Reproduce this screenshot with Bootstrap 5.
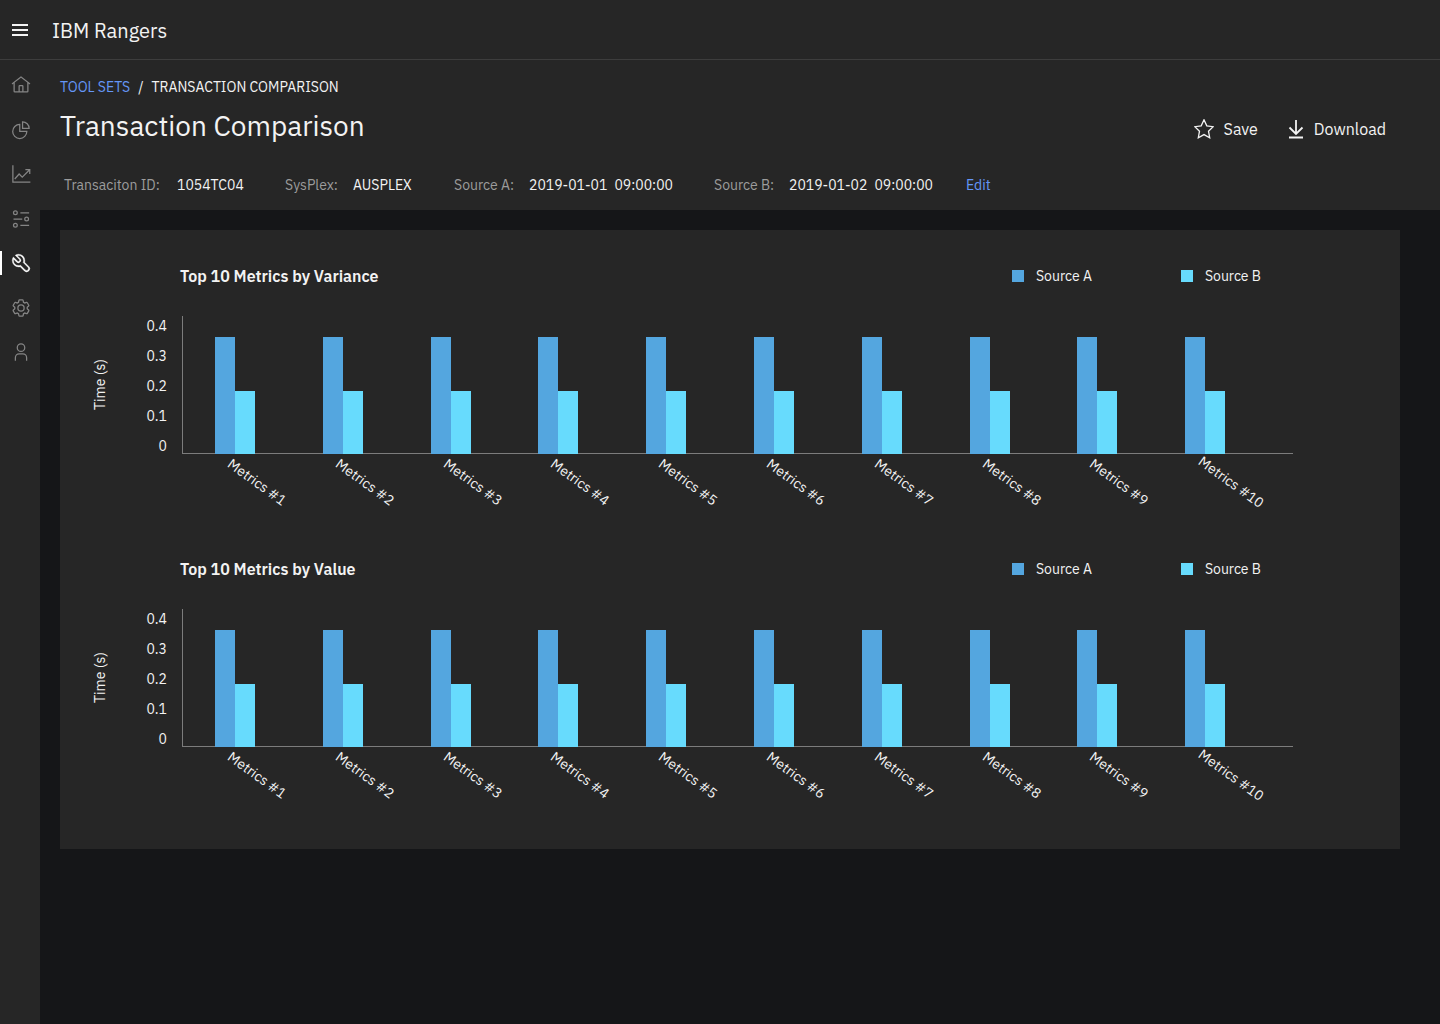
<!DOCTYPE html>
<html lang="en">
<head>
<meta charset="utf-8">
<meta name="viewport" content="width=device-width, initial-scale=1">
<title>Transaction Comparison - IBM Rangers</title>
<link href="https://cdn.jsdelivr.net/npm/bootstrap@5.3.0/dist/css/bootstrap.min.css" rel="stylesheet">
<style>
:root { --surface: #262626; --ground: #151618; --axis: #7c7c7c; --src-a: #54a6df; --src-b: #67dbfd; --accent: #6596f7; }
body { font-family: "IBM Plex Sans", Roboto, "Noto Sans", sans-serif; font-size: 14px; line-height: 20px; color: #f3f3f3; background: var(--ground); }
a { color: var(--accent); text-decoration: none; }
.topbar { height: 60px; padding: 2px 12px 0; gap: 24px; background: var(--surface); border-bottom: 1px solid #3d3d3d; }
.brand { font-size: 20px; color: #f3f3f3; }
.plain-btn { background: none; border: 0; padding: 0; color: #f3f3f3; }
.side { width: 40px; background: var(--surface); padding-top: 13px; }
.side-list { height: 291px; }
.side-link { height: 24px; padding-left: 9px; border-left: 2px solid transparent; color: #858585; }
.side-link.current { border-left-color: #fff; color: #fff; }
.side-link svg { width: 20px; height: 20px; }
.page-head { background: var(--surface); height: 150px; padding: 17px 54px 0 20px; }
.crumbs { --bs-breadcrumb-margin-bottom: 0; --bs-breadcrumb-font-size: 14px; --bs-breadcrumb-item-padding-x: 8px; --bs-breadcrumb-divider-color: #f3f3f3; --bs-breadcrumb-item-active-color: #f3f3f3; text-transform: uppercase; }
.page-title { font-size: 28px; line-height: 36px; font-weight: 400; margin: 11px 0 0; }
.actions { gap: 30px; padding-top: 42px; }
.actions .plain-btn { gap: 10px; font-size: 16px; line-height: 20px; }
.facts { display: grid; grid-template-columns: 113px 108px 68px 101px 75px 185px 75px 177px auto; justify-content: start; margin: 31px 0 0 4px; white-space: nowrap; }
.facts dt { font-weight: 400; color: #9c9c9c; }
.facts dd { margin: 0; }
.moment { gap: 7px; }
.panel { margin: 20px 40px 20px 20px; padding: 34px 107px 44px 0; gap: 45px; background: var(--surface); }
.chart-head { height: 24px; margin-bottom: 23px; padding: 0 32px 0 120px; }
.chart-title { font-size: 16px; line-height: 24px; font-weight: 600; margin: 0; }
.legend-list { gap: 89px; }
.legend-list li { gap: 12px; }
.swatch { width: 12px; height: 12px; }
.src-a { background: var(--src-a); }
.src-b { background: var(--src-b); }
.y-title { width: 80px; height: 146px; }
.y-title span { writing-mode: vertical-rl; transform: rotate(180deg); }
.ticks { width: 27px; margin-right: 15px; line-height: 30px; text-align: right; }
.plot { margin-top: 5px; padding-left: 33px; background: linear-gradient(var(--axis), var(--axis)) 0 0 / 1px 138px no-repeat, linear-gradient(var(--axis), var(--axis)) 0 137px / 100% 1px no-repeat; }
.metric { flex: 1 1 0; min-width: 0; }
.bars { height: 138px; }
.bar { width: 20px; height: calc(var(--seconds) * 300px); }
.metric-name { height: 58px; white-space: nowrap; }
.metric-name span { display: inline-block; margin: 18px 0 0 8px; transform: rotate(36deg); }
</style>
</head>
<body class="d-flex flex-column min-vh-100">
<header class="topbar d-flex align-items-center">
  <button class="plain-btn d-flex" type="button" aria-label="Menu">
    <svg width="16" height="16" viewBox="0 0 16 16" fill="currentColor"><path d="M0 1h16v2H0zM0 6h16v2H0zM0 11h16v2H0z"/></svg>
  </button>
  <a class="brand" href="#">IBM Rangers</a>
</header>
<div class="d-flex flex-grow-1">
  <nav class="side flex-shrink-0" aria-label="Main">
    <div class="side-list d-flex flex-column justify-content-between">
      <a class="side-link d-flex align-items-center" href="#" aria-label="Home"><svg viewBox="0 0 32 32" fill="currentColor"><path d="M16.61,2.21a1,1,0,0,0-1.24,0L1,13.42,2.24,15,4,13.62V26a2,2,0,0,0,2,2H26a2,2,0,0,0,2-2V13.63L29.76,15,31,13.43ZM18,26H14V18h4Zm2,0V18a2,2,0,0,0-2-2H14a2,2,0,0,0-2,2v8H6V12.06L16,4.27l10,7.8V26Z"/></svg></a>
      <a class="side-link d-flex align-items-center" href="#" aria-label="Reports"><svg viewBox="0 0 32 32" fill="none" stroke="currentColor" stroke-width="2"><path d="M14 7A11.3 11.3 0 1 0 25.300 18.300H14ZM18.500 3V13.500H29A10.500 10.500 0 0 0 18.500 3Z"/></svg></a>
      <a class="side-link d-flex align-items-center" href="#" aria-label="Trends"><svg viewBox="0 0 32 32" fill="none" stroke="currentColor" stroke-width="2"><path d="M3 2V29H31M6 24l7-8 5 5L29 10M23 9h7v7"/></svg></a>
      <a class="side-link d-flex align-items-center" href="#" aria-label="Parameters"><svg viewBox="0 0 32 32" fill="none" stroke="currentColor" stroke-width="2"><circle cx="7" cy="6" r="3"/><circle cx="25" cy="16" r="3"/><circle cx="7" cy="26" r="3"/><path d="M15 6h14M4 16h14M15 26h14"/></svg></a>
      <a class="side-link current d-flex align-items-center" href="#" aria-label="Tool sets" aria-current="page"><svg viewBox="0 0 32 32" fill="currentColor" stroke="currentColor" stroke-width=".6"><path d="M12.1,2a9.8,9.8,0,0,0-5.4,1.6l6.4,6.4a2.1,2.1,0,0,1,.2,3,2.1,2.1,0,0,1-3-.2L3.7,6.4A9.84,9.84,0,0,0,2,12.1,10.14,10.14,0,0,0,12.1,22.2a10.9,10.9,0,0,0,2.6-.3l6.7,6.7a5,5,0,0,0,7.1-7.1l-6.7-6.7a10.9,10.9,0,0,0,.3-2.6A10,10,0,0,0,12.1,2Zm8,10.1a7.61,7.61,0,0,1-.3,2.1l-.3,1.1.8.8,6.7,6.7a2.88,2.88,0,0,1,.9,2.1A2.72,2.72,0,0,1,27,27a2.9,2.9,0,0,1-4.2,0l-6.7-6.7-.8-.8-1.1.3a7.61,7.61,0,0,1-2.1.3,8.27,8.27,0,0,1-5.7-2.3A7.63,7.63,0,0,1,4,12.1a8.33,8.33,0,0,1,.3-2.2l4.4,4.4a4.14,4.14,0,0,0,5.9.2,4.14,4.14,0,0,0-.2-5.9L10,4.2a6.45,6.45,0,0,1,2-.3,8.27,8.27,0,0,1,5.7,2.3A8.49,8.49,0,0,1,20.1,12.1Z"/></svg></a>
      <a class="side-link d-flex align-items-center" href="#" aria-label="Settings"><svg viewBox="0 0 32 32" fill="currentColor"><path d="M27,16.76c0-.25,0-.5,0-.76s0-.51,0-.77l1.92-1.68A2,2,0,0,0,29.3,11L26.94,7a2,2,0,0,0-1.73-1,2,2,0,0,0-.64.1l-2.43.82a11.35,11.35,0,0,0-1.31-.75l-.51-2.52a2,2,0,0,0-2-1.61H13.64a2,2,0,0,0-2,1.61l-.51,2.52a11.48,11.48,0,0,0-1.32.75L7.43,6.06A2,2,0,0,0,6.79,6,2,2,0,0,0,5.06,7L2.7,11a2,2,0,0,0,.41,2.51L5,15.24c0,.25,0,.5,0,.76s0,.51,0,.77L3.11,18.45A2,2,0,0,0,2.7,21L5.06,25a2,2,0,0,0,1.73,1,2,2,0,0,0,.64-.1l2.43-.82a11.35,11.35,0,0,0,1.31.75l.51,2.52a2,2,0,0,0,2,1.61h4.72a2,2,0,0,0,2-1.61l.51-2.52a11.48,11.48,0,0,0,1.32-.75l2.42.82a2,2,0,0,0,.64.1,2,2,0,0,0,1.73-1L29.3,21a2,2,0,0,0-.41-2.51ZM25.21,24l-3.43-1.16a8.86,8.86,0,0,1-2.71,1.57L18.36,28H13.64l-.71-3.55a9.36,9.36,0,0,1-2.7-1.57L6.79,24,4.43,20l2.72-2.4a8.9,8.9,0,0,1,0-3.13L4.43,12,6.79,8l3.43,1.16a8.86,8.86,0,0,1,2.71-1.57L13.64,4h4.72l.71,3.55a9.36,9.36,0,0,1,2.7,1.57L25.21,8,27.57,12l-2.72,2.4a8.9,8.9,0,0,1,0,3.13L27.57,20Z"/><circle cx="16" cy="16" r="5" fill="none" stroke="currentColor" stroke-width="2"/></svg></a>
      <a class="side-link d-flex align-items-center" href="#" aria-label="Account"><svg viewBox="0 0 32 32" fill="currentColor"><path d="M16,4a5,5,0,1,1-5,5,5,5,0,0,1,5-5m0-2a7,7,0,1,0,7,7A7,7,0,0,0,16,2ZM26,30H24V25a5,5,0,0,0-5-5H13a5,5,0,0,0-5,5v5H6V25a7,7,0,0,1,7-7h6a7,7,0,0,1,7,7Z"/></svg></a>
    </div>
  </nav>
  <main class="flex-grow-1">
    <div class="page-head">
      <div class="d-flex justify-content-between align-items-start">
        <div>
          <nav aria-label="Breadcrumb">
            <ol class="breadcrumb crumbs">
              <li class="breadcrumb-item"><a href="#">Tool sets</a></li>
              <li class="breadcrumb-item active" aria-current="page">Transaction comparison</li>
            </ol>
          </nav>
          <h1 class="page-title">Transaction Comparison</h1>
        </div>
        <div class="actions d-flex">
          <button class="plain-btn d-flex align-items-center" type="button"><svg width="20" height="20" viewBox="1 1 20 20" fill="none" stroke="currentColor" stroke-width="1.300"><path d="M11 1.800l2.800 6 6.400.9-4.700 4.500 1.200 6.500L11 16.600l-5.700 3.100 1.200-6.500L1.800 8.700l6.400-.9z"/></svg>Save</button>
          <button class="plain-btn d-flex align-items-center" type="button"><svg width="16" height="20" viewBox="0 0 16 20" fill="none" stroke="currentColor" stroke-width="1.800"><path d="M8 1v13.500M1.500 8.500L8 15l6.500-6.500M1 18.500h14"/></svg>Download</button>
        </div>
      </div>
      <dl class="facts">
        <dt>Transaciton ID:</dt><dd>1054TC04</dd>
        <dt>SysPlex:</dt><dd>AUSPLEX</dd>
        <dt>Source A:</dt><dd class="moment d-flex"><span>2019-01-01</span><span>09:00:00</span></dd>
        <dt>Source B:</dt><dd class="moment d-flex"><span>2019-01-02</span><span>09:00:00</span></dd>
        <dd><a href="#">Edit</a></dd>
      </dl>
    </div>
    <div class="panel d-flex flex-column">
      <section>
        <div class="chart-head d-flex justify-content-between align-items-center">
          <h2 class="chart-title">Top 10 Metrics by Variance</h2>
          <ul class="legend-list list-unstyled d-flex mb-0">
            <li class="d-flex align-items-center"><span class="swatch src-a"></span>Source A</li>
            <li class="d-flex align-items-center"><span class="swatch src-b"></span>Source B</li>
          </ul>
        </div>
        <div class="d-flex">
          <div class="y-title d-flex align-items-center justify-content-center"><span>Time (s)</span></div>
          <div class="ticks"><div>0.4</div><div>0.3</div><div>0.2</div><div>0.1</div><div>0</div></div>
          <div class="plot d-flex flex-grow-1">
            <div class="metric"><div class="bars d-flex align-items-end"><div class="bar src-a" style="--seconds:.39"></div><div class="bar src-b" style="--seconds:.21"></div></div><div class="metric-name"><span>Metrics #1</span></div></div>
            <div class="metric"><div class="bars d-flex align-items-end"><div class="bar src-a" style="--seconds:.39"></div><div class="bar src-b" style="--seconds:.21"></div></div><div class="metric-name"><span>Metrics #2</span></div></div>
            <div class="metric"><div class="bars d-flex align-items-end"><div class="bar src-a" style="--seconds:.39"></div><div class="bar src-b" style="--seconds:.21"></div></div><div class="metric-name"><span>Metrics #3</span></div></div>
            <div class="metric"><div class="bars d-flex align-items-end"><div class="bar src-a" style="--seconds:.39"></div><div class="bar src-b" style="--seconds:.21"></div></div><div class="metric-name"><span>Metrics #4</span></div></div>
            <div class="metric"><div class="bars d-flex align-items-end"><div class="bar src-a" style="--seconds:.39"></div><div class="bar src-b" style="--seconds:.21"></div></div><div class="metric-name"><span>Metrics #5</span></div></div>
            <div class="metric"><div class="bars d-flex align-items-end"><div class="bar src-a" style="--seconds:.39"></div><div class="bar src-b" style="--seconds:.21"></div></div><div class="metric-name"><span>Metrics #6</span></div></div>
            <div class="metric"><div class="bars d-flex align-items-end"><div class="bar src-a" style="--seconds:.39"></div><div class="bar src-b" style="--seconds:.21"></div></div><div class="metric-name"><span>Metrics #7</span></div></div>
            <div class="metric"><div class="bars d-flex align-items-end"><div class="bar src-a" style="--seconds:.39"></div><div class="bar src-b" style="--seconds:.21"></div></div><div class="metric-name"><span>Metrics #8</span></div></div>
            <div class="metric"><div class="bars d-flex align-items-end"><div class="bar src-a" style="--seconds:.39"></div><div class="bar src-b" style="--seconds:.21"></div></div><div class="metric-name"><span>Metrics #9</span></div></div>
            <div class="metric"><div class="bars d-flex align-items-end"><div class="bar src-a" style="--seconds:.39"></div><div class="bar src-b" style="--seconds:.21"></div></div><div class="metric-name"><span>Metrics #10</span></div></div>
          </div>
        </div>
      </section>
      <section>
        <div class="chart-head d-flex justify-content-between align-items-center">
          <h2 class="chart-title">Top 10 Metrics by Value</h2>
          <ul class="legend-list list-unstyled d-flex mb-0">
            <li class="d-flex align-items-center"><span class="swatch src-a"></span>Source A</li>
            <li class="d-flex align-items-center"><span class="swatch src-b"></span>Source B</li>
          </ul>
        </div>
        <div class="d-flex">
          <div class="y-title d-flex align-items-center justify-content-center"><span>Time (s)</span></div>
          <div class="ticks"><div>0.4</div><div>0.3</div><div>0.2</div><div>0.1</div><div>0</div></div>
          <div class="plot d-flex flex-grow-1">
            <div class="metric"><div class="bars d-flex align-items-end"><div class="bar src-a" style="--seconds:.39"></div><div class="bar src-b" style="--seconds:.21"></div></div><div class="metric-name"><span>Metrics #1</span></div></div>
            <div class="metric"><div class="bars d-flex align-items-end"><div class="bar src-a" style="--seconds:.39"></div><div class="bar src-b" style="--seconds:.21"></div></div><div class="metric-name"><span>Metrics #2</span></div></div>
            <div class="metric"><div class="bars d-flex align-items-end"><div class="bar src-a" style="--seconds:.39"></div><div class="bar src-b" style="--seconds:.21"></div></div><div class="metric-name"><span>Metrics #3</span></div></div>
            <div class="metric"><div class="bars d-flex align-items-end"><div class="bar src-a" style="--seconds:.39"></div><div class="bar src-b" style="--seconds:.21"></div></div><div class="metric-name"><span>Metrics #4</span></div></div>
            <div class="metric"><div class="bars d-flex align-items-end"><div class="bar src-a" style="--seconds:.39"></div><div class="bar src-b" style="--seconds:.21"></div></div><div class="metric-name"><span>Metrics #5</span></div></div>
            <div class="metric"><div class="bars d-flex align-items-end"><div class="bar src-a" style="--seconds:.39"></div><div class="bar src-b" style="--seconds:.21"></div></div><div class="metric-name"><span>Metrics #6</span></div></div>
            <div class="metric"><div class="bars d-flex align-items-end"><div class="bar src-a" style="--seconds:.39"></div><div class="bar src-b" style="--seconds:.21"></div></div><div class="metric-name"><span>Metrics #7</span></div></div>
            <div class="metric"><div class="bars d-flex align-items-end"><div class="bar src-a" style="--seconds:.39"></div><div class="bar src-b" style="--seconds:.21"></div></div><div class="metric-name"><span>Metrics #8</span></div></div>
            <div class="metric"><div class="bars d-flex align-items-end"><div class="bar src-a" style="--seconds:.39"></div><div class="bar src-b" style="--seconds:.21"></div></div><div class="metric-name"><span>Metrics #9</span></div></div>
            <div class="metric"><div class="bars d-flex align-items-end"><div class="bar src-a" style="--seconds:.39"></div><div class="bar src-b" style="--seconds:.21"></div></div><div class="metric-name"><span>Metrics #10</span></div></div>
          </div>
        </div>
      </section>
    </div>
  </main>
</div>
<script src="https://cdn.jsdelivr.net/npm/bootstrap@5.3.0/dist/js/bootstrap.bundle.min.js"></script>
</body>
</html>
